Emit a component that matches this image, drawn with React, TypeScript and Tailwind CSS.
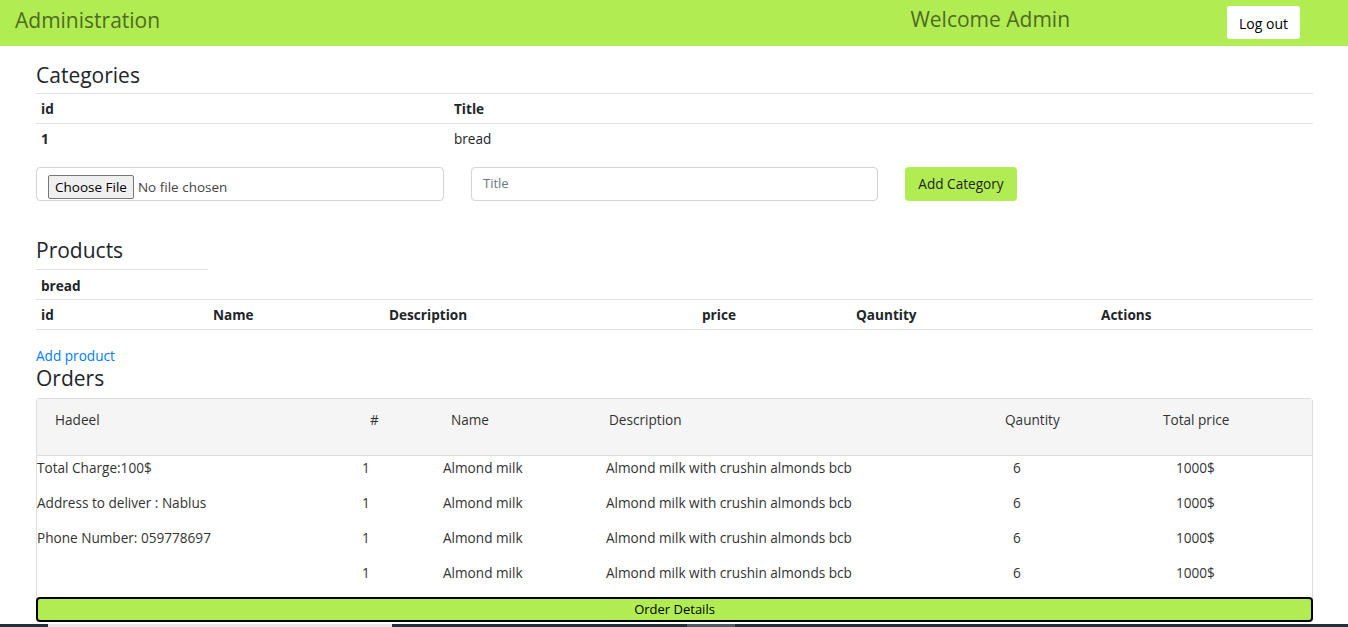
export default function App() {
  const rows = [
    "Total Charge:100$",
    "Address to deliver : Nablus",
    "Phone Number: 059778697",
    "",
  ];

  return (
    <div className="relative h-[627px] overflow-hidden bg-white font-['Open_Sans',sans-serif] text-[13.6px] text-[#212529]">
      <header className="flex h-[46px] items-start bg-[#b1ed52]">
        <h1 className="mt-[5px] pl-[15px] text-[21px] leading-[30px] text-[#4f6b23]">Administration</h1>
        <div className="ml-auto flex items-start">
          <span className="mr-[157px] mt-[4px] text-[21px] leading-[30px] text-[#4f6b23]">Welcome Admin</span>
          <button className="mr-[48px] mt-[6px] h-[33px] rounded-[3px] bg-white px-[12px] pt-[2px] text-[14px] text-black">
            Log out
          </button>
        </div>
      </header>

      <main className="pl-[36px] pr-[35px]">
        <h2 className="mt-[14px] text-[21px] font-medium leading-[30px]">Categories</h2>
        <div className="mt-[3px] border-t border-[#dee2e6]">
          <div className="flex h-[30px] items-center border-b border-[#dee2e6] pt-[1px] font-bold">
            <span className="w-[418px] pl-[5px]">id</span>
            <span>Title</span>
          </div>
          <div className="flex h-[30px] items-center">
            <span className="w-[418px] pl-[5px] font-bold">1</span>
            <span>bread</span>
          </div>
        </div>

        <div className="mt-[13px] flex items-center">
          <div className="flex h-[34px] w-[408px] items-end rounded-[4px] border border-[#ced4da] pb-[1px] pl-[11px]">
            <span className="flex h-[24px] items-center rounded-[2px] border border-[#767676] bg-[#efefef] px-[6px] text-[13.5px] text-black">
              Choose File
            </span>
            <span className="mb-[2px] ml-[4px] text-[13.5px] text-[#444]">No file chosen</span>
          </div>
          <div className="ml-[27px] flex h-[34px] w-[407px] items-center rounded-[4px] border border-[#ced4da] pl-[11px] text-[13px] text-[#6c757d]">
            Title
          </div>
          <button className="ml-[27px] h-[34px] w-[112px] rounded-[4px] bg-[#b1ed52] text-[13.6px] text-[#222]">
            Add Category
          </button>
        </div>

        <h2 className="mt-[34px] text-[21px] font-medium leading-[30px]">Products</h2>
        <div className="mt-[4px] w-[172px] border-t border-[#dee2e6]" />
        <div className="flex h-[29px] items-center pl-[5px] pt-[3px] font-bold">bread</div>
        <div className="flex h-[31px] items-center border-y border-[#dee2e6] pt-[2px] font-bold">
          <span className="w-[177px] pl-[5px]">id</span>
          <span className="w-[176px]">Name</span>
          <span className="w-[313px]">Description</span>
          <span className="w-[154px]">price</span>
          <span className="w-[245px]">Qauntity</span>
          <span>Actions</span>
        </div>
        <a className="mt-[16px] block leading-[20px] text-[#007bff]">Add product</a>
        <h2 className="text-[21px] font-medium leading-[24px]">Orders</h2>

        <div className="mt-[8px] rounded-[4px] border border-b-0 border-[#ddd]">
          <div className="flex h-[57px] border-b border-[#ddd] bg-[#f5f5f5] pt-[11px] text-[#333]">
            <span className="w-[333px] pl-[18px]">Hadeel</span>
            <span className="w-[81px]">#</span>
            <span className="w-[158px]">Name</span>
            <span className="w-[396px]">Description</span>
            <span className="w-[158px]">Qauntity</span>
            <span>Total price</span>
          </div>
          <div className="pt-[2px]">
            {rows.map((r, i) => (
              <div key={i} className="flex h-[35px] items-start leading-[20px] text-[#333]">
                <span className="w-[325px]">{r}</span>
                <span className="w-[81px]">1</span>
                <span className="w-[163px]">Almond milk</span>
                <span className="w-[407px]">Almond milk with crushin almonds bcb</span>
                <span className="w-[163px]">6</span>
                <span>1000$</span>
              </div>
            ))}
          </div>
          <button className="-mt-[1px] -ml-[1px] h-[25px] w-[calc(100%+2px)] rounded-[4px] border-2 border-black bg-[#b1ed52] text-[13px] leading-none text-black">
            Order Details
          </button>
        </div>
      </main>

      <div className="absolute bottom-0 left-0 flex h-[3px] w-full bg-[#1f313c]">
        <div className="ml-[48px] w-[344px] bg-[#e6e6e6]" />
        <div className="ml-[295px] w-[48px] bg-[#4d5b63]" />
      </div>
    </div>
  );
}
